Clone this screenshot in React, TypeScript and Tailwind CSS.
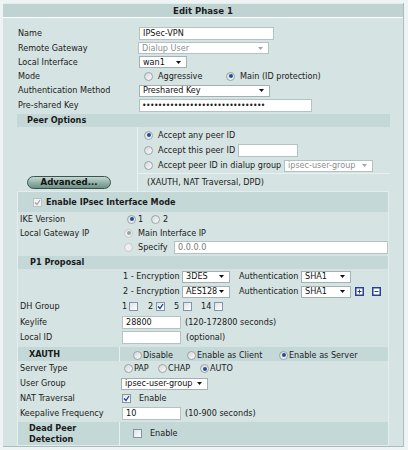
import React from "react";

function Radio({ checked = false, disabled = false, className = "" }: { checked?: boolean; disabled?: boolean; className?: string }) {
  return (
    <span
      className={
        "inline-flex shrink-0 items-center justify-center w-[9px] h-[9px] rounded-full border " +
        (disabled ? "border-[#c2c8c8] bg-[#eef0f0] " : "border-[#9aa4a6] bg-gradient-to-br from-[#d4d8d8] to-[#fbfbfb] ") +
        className
      }
    >
      {checked && <span className={"w-[4px] h-[4px] rounded-full " + (disabled ? "bg-[#9aa0a0]" : "bg-[#1f4f9c]")} />}
    </span>
  );
}

function Checkbox({ checked = false, disabled = false, className = "" }: { checked?: boolean; disabled?: boolean; className?: string }) {
  return (
    <span
      className={
        "inline-flex shrink-0 items-center justify-center w-[9px] h-[9px] border " +
        (disabled ? "border-[#b9c2c2] bg-[#f1f3f3] " : "border-[#8394a8] bg-gradient-to-br from-[#dfe2e4] to-[#ffffff] ") +
        className
      }
    >
      {checked && (
        <svg width="7" height="7" viewBox="0 0 7 7">
          <polyline points="1,3.5 3,5.5 6,1" fill="none" stroke={disabled ? "#a0a8a8" : "#1e3f8f"} strokeWidth="1.3" />
        </svg>
      )}
    </span>
  );
}

function Select({ value, w, disabled = false }: { value: string; w: string; disabled?: boolean }) {
  return (
    <div
      className={
        "flex shrink-0 items-center justify-between h-[12px] pl-[3px] pr-[5px] border bg-white " +
        (disabled ? "border-[#b6c2c2] text-[#8a8f90] " : "border-[#a2b2b2] text-[#111] ") +
        w
      }
    >
      <span className="leading-none">{value}</span>
      <svg width="5" height="3" viewBox="0 0 5 3" className="shrink-0">
        <polygon points="0,0 5,0 2.5,3" fill={disabled ? "#a0a8a8" : "#111"} />
      </svg>
    </div>
  );
}

function Input({ value = "", w, className = "" }: { value?: string; w: string; className?: string }) {
  return (
    <div className={"flex shrink-0 items-center h-[13px] pl-[3px] border border-[#b4c2c2] bg-white text-[#111] " + w + " " + className}>
      <span className="leading-none">{value}</span>
    </div>
  );
}

function PlusMinus({ minus = false }: { minus?: boolean }) {
  return (
    <svg width="9" height="9" viewBox="0 0 9 9" className="shrink-0 block">
      <rect x="0" y="0" width="9" height="9" fill="#2a3f98" />
      <rect x="1.5" y="1.5" width="6" height="6" fill="#ffffff" />
      <rect x="2.5" y="4" width="4" height="1" fill="#2a3f98" />
      {!minus && <rect x="4" y="2.5" width="1" height="4" fill="#2a3f98" />}
    </svg>
  );
}

export default function App() {
  return (
    <div className="w-[408px] h-[450px] bg-[#eef3f3] pt-[3px] pl-[3px] text-[9px] text-[#1a1a1a] [font-family:'DejaVu_Sans_Condensed','DejaVu_Sans',sans-serif] leading-none whitespace-nowrap">
      <div className="w-[401px] h-[444px] bg-[#d5e4e2] border-r border-b border-[#aabcbc]">
        {/* header */}
        <div className="h-[14px] bg-[#bfd3d3] border-t border-[#e4eeee] flex items-center justify-center font-bold text-[9.5px]">Edit Phase 1</div>
        <div className="h-[1px] bg-white" />

        <div className="ml-[14px] w-[373px] pt-[8px]">
          <div className="flex items-center h-[15px]">
            <div className="w-[122px] shrink-0 pl-[1px]">Name</div>
            <Input w="w-[135px]" value="IPSec-VPN" />
          </div>
          <div className="flex items-center h-[14px]">
            <div className="w-[121px] shrink-0 pl-[1px]">Remote Gateway</div>
            <Select w="w-[131px]" value="Dialup User" disabled />
          </div>
          <div className="flex items-center h-[14px]">
            <div className="w-[122px] shrink-0 pl-[1px]">Local Interface</div>
            <Select w="w-[48px]" value="wan1" />
          </div>
          <div className="flex items-center h-[14px]">
            <div className="w-[127px] shrink-0 pl-[1px]">Mode</div>
            <Radio />
            <span className="ml-[5px] w-[68px] shrink-0">Aggressive</span>
            <Radio checked />
            <span className="ml-[5px]">Main (ID protection)</span>
          </div>
          <div className="flex items-center h-[15px]">
            <div className="w-[122px] shrink-0 pl-[1px]">Authentication Method</div>
            <Select w="w-[131px]" value="Preshared Key" />
          </div>
          <div className="flex items-center h-[15px]">
            <div className="w-[122px] shrink-0 pl-[1px]">Pre-shared Key</div>
            <div className="flex items-center h-[13px] w-[173px] pl-[2px] border border-[#b4c2c2] bg-white overflow-hidden">
              <span className="text-[8.5px] tracking-[-0.55px] leading-none">{"•".repeat(31)}</span>
            </div>
          </div>
          <div className="mt-[1px] h-[13px] bg-[#c5d8d8] flex items-center pl-[10px] font-bold">Peer Options</div>

          <div className="flex">
            <div className="w-[120px] shrink-0" />
            <div className="flex-1 border-l border-[#e8f0f0] pl-[6px]">
              <div className="flex items-center h-[16px]">
                <Radio checked />
                <span className="ml-[5px]">Accept any peer ID</span>
              </div>
              <div className="flex items-center h-[15px]">
                <Radio />
                <span className="ml-[5px] w-[80px] shrink-0">Accept this peer ID</span>
                <Input w="w-[60px]" className="h-[12px]" />
              </div>
              <div className="flex items-center h-[15px]">
                <Radio />
                <span className="ml-[5px] w-[126px] shrink-0">Accept peer ID in dialup group</span>
                <Select w="w-[89px]" value="ipsec-user-group" disabled />
              </div>
            </div>
          </div>

          <div className="flex h-[18px]">
            <div className="w-[120px] shrink-0 flex items-center pl-[10px]">
              <div className="w-[84px] h-[13px] rounded-full border border-[#3e524d] bg-gradient-to-b from-[#c3d8d2] via-[#93b3aa] to-[#6e9087] flex items-center justify-center font-bold text-[#111] text-[9.5px]">
                Advanced...
              </div>
            </div>
            <div className="flex-1 border-l border-t border-[#e8f0f0] flex items-center pl-[9px]">(XAUTH, NAT Traversal, DPD)</div>
          </div>

          {/* advanced box */}
          <div className="w-[372px] border border-[#e4eded]">
            <div className="h-[20px] bg-[#c5d8d8] flex items-center pl-[15px]">
              <Checkbox checked disabled />
              <span className="ml-[4px] font-bold">Enable IPsec Interface Mode</span>
            </div>

            <div className="flex items-center h-[14px]">
              <div className="w-[109px] shrink-0 pl-[2px]">IKE Version</div>
              <Radio checked />
              <span className="ml-[2px] w-[13px] shrink-0">1</span>
              <Radio />
              <span className="ml-[3px]">2</span>
            </div>
            <div className="flex items-center h-[14px]">
              <div className="w-[106px] shrink-0 pl-[2px]">Local Gateway IP</div>
              <Radio checked disabled />
              <span className="ml-[5px]">Main Interface IP</span>
            </div>
            <div className="flex items-center h-[15px]">
              <div className="w-[106px] shrink-0 pl-[2px]" />
              <Radio disabled />
              <span className="ml-[5px] w-[36px] shrink-0">Specify</span>
              <Input w="w-[214px]" value="0.0.0.0" className="text-[#777] h-[12px]" />
            </div>
            <div className="mt-[1px] h-[13px] bg-[#c5d8d8] flex items-center pl-[12px] font-bold">P1 Proposal</div>

            <div className="flex items-center h-[15px]">
              <div className="w-[105px] shrink-0" />
              <span className="w-[59px] shrink-0">1 - Encryption</span>
              <Select w="w-[48px]" value="3DES" />
              <span className="ml-[9px] w-[62px] shrink-0">Authentication</span>
              <Select w="w-[50px]" value="SHA1" />
            </div>
            <div className="flex items-center h-[15px]">
              <div className="w-[105px] shrink-0" />
              <span className="w-[59px] shrink-0">2 - Encryption</span>
              <Select w="w-[48px]" value="AES128" />
              <span className="ml-[9px] w-[62px] shrink-0">Authentication</span>
              <Select w="w-[50px]" value="SHA1" />
              <span className="ml-[4px]"><PlusMinus /></span>
              <span className="ml-[8px]"><PlusMinus minus /></span>
            </div>
            <div className="flex items-center h-[15px]">
              <div className="w-[104px] shrink-0 pl-[2px]">DH Group</div>
              <span className="w-[7px] shrink-0">1</span>
              <Checkbox />
              <span className="ml-[10px] w-[8px] shrink-0">2</span>
              <Checkbox checked />
              <span className="ml-[9px] w-[9px] shrink-0">5</span>
              <Checkbox />
              <span className="ml-[9px] w-[13px] shrink-0">14</span>
              <Checkbox />
            </div>
            <div className="flex items-center h-[16px]">
              <div className="w-[104px] shrink-0 pl-[2px]">Keylife</div>
              <Input w="w-[59px]" value="28800" />
              <span className="ml-[4px]">(120-172800 seconds)</span>
            </div>
            <div className="flex items-center h-[15px]">
              <div className="w-[104px] shrink-0 pl-[2px]">Local ID</div>
              <Input w="w-[59px]" />
              <span className="ml-[5px]">(optional)</span>
            </div>

            <div className="mt-[2px] h-[14px] bg-[#c5d8d8] flex">
              <div className="w-[101px] shrink-0 pl-[11px] flex items-center font-bold">XAUTH</div>
              <div className="flex-1 border-l border-[#e8f0f0] flex items-center pl-[13px] pt-[2px]">
                <Radio />
                <span className="ml-[1px] w-[44px] shrink-0">Disable</span>
                <Radio />
                <span className="ml-[1px] w-[82px] shrink-0">Enable as Client</span>
                <Radio checked />
                <span className="ml-[1px]">Enable as Server</span>
              </div>
            </div>

            <div className="flex items-center h-[15px]">
              <div className="w-[106px] shrink-0 pl-[2px]">Server Type</div>
              <Radio />
              <span className="ml-[1px] w-[24px] shrink-0">PAP</span>
              <Radio />
              <span className="ml-[1px] w-[32px] shrink-0">CHAP</span>
              <Radio checked />
              <span className="ml-[1px]">AUTO</span>
            </div>
            <div className="flex items-center h-[15px]">
              <div className="w-[103px] shrink-0 pl-[2px]">User Group</div>
              <Select w="w-[87px]" value="ipsec-user-group" />
            </div>
            <div className="flex items-center h-[14px]">
              <div className="w-[104px] shrink-0 pl-[2px]">NAT Traversal</div>
              <Checkbox checked />
              <span className="ml-[8px]">Enable</span>
            </div>
            <div className="flex items-center h-[16px]">
              <div className="w-[104px] shrink-0 pl-[2px]">Keepalive Frequency</div>
              <Input w="w-[59px]" value="10" />
              <span className="ml-[4px]">(10-900 seconds)</span>
            </div>

            <div className="mt-[1px] h-[23px] bg-[#c5d8d8] flex">
              <div className="w-[101px] shrink-0 pl-[11px] flex flex-col justify-center font-bold leading-[11px]">
                <span>Dead Peer</span>
                <span>Detection</span>
              </div>
              <div className="flex-1 border-l border-[#e8f0f0] flex items-center pl-[13px]">
                <Checkbox />
                <span className="ml-[8px]">Enable</span>
              </div>
            </div>
          </div>
        </div>
      </div>
    </div>
  );
}
